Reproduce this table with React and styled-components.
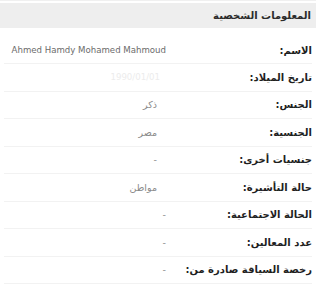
import React from 'react';
import styled, { createGlobalStyle } from 'styled-components';

const rows = [
  { label: 'الاسم:', value: 'Ahmed Hamdy Mohamed Mahmoud', inset: 146, tone: '#6b6b6b' },
  { label: 'تاريخ الميلاد:', value: '1990/01/01', inset: 152, tone: '#ececec' },
  { label: 'الجنس:', value: 'ذكر', inset: 155 },
  { label: 'الجنسية:', value: 'مصر', inset: 155 },
  { label: 'جنسيات أخرى:', value: '-', inset: 155 },
  { label: 'حالة التأشيرة:', value: 'مواطن', inset: 155 },
  { label: 'الحالة الاجتماعية:', value: '-', inset: 146 },
  { label: 'عدد المعالين:', value: '-', inset: 146 },
  { label: 'رخصة السياقة صادرة من:', value: '-', inset: 146 },
];

const Global = createGlobalStyle`
  body {
    margin: 0;
    background: #fff;
    font-family: Tahoma, "DejaVu Sans", sans-serif;
  }
`;

const Panel = styled.div`
  direction: rtl;
  width: 316px;
  border-top: 1px solid #f0f0f0;
  padding-top: 2px;
`;

const Header = styled.div`
  background: #eeeeee;
  height: 25px;
  line-height: 25px;
  padding-right: 5px;
  font-size: 10px;
  font-weight: bold;
  color: #2b2b2b;
  margin-bottom: 9px;
`;

const List = styled.div`
  display: flex;
  flex-direction: column;
  padding: 0 4px;
`;

const Row = styled.div`
  display: flex;
  align-items: center;
  height: ${p => (p.$first ? 26 : 26.5)}px;
  border-bottom: 1px solid #f2f2f2;
`;

const Label = styled.div`
  flex: 0 0 ${p => p.$inset}px;
  box-sizing: border-box;
  font-size: 10px;
  font-weight: bold;
  color: #1f1f1f;
  white-space: nowrap;
`;

const Value = styled.div`
  flex: 1;
  white-space: nowrap;
  font-size: ${p => (p.$latin ? 8.6 : 9.5)}px;
  color: ${p => p.$tone};
`;

export default function App() {
  return (
    <>
      <Global />
      <Panel>
        <Header>المعلومات الشخصية</Header>
        <List>
          {rows.map((r, i) => (
            <Row key={i} $first={i === 0}>
              <Label $inset={r.inset}>{r.label}</Label>
              <Value $tone={r.tone || '#8a8a8a'} $latin={/[A-Za-z0-9]/.test(r.value)}>
                {r.value}
              </Value>
            </Row>
          ))}
        </List>
      </Panel>
    </>
  );
}
